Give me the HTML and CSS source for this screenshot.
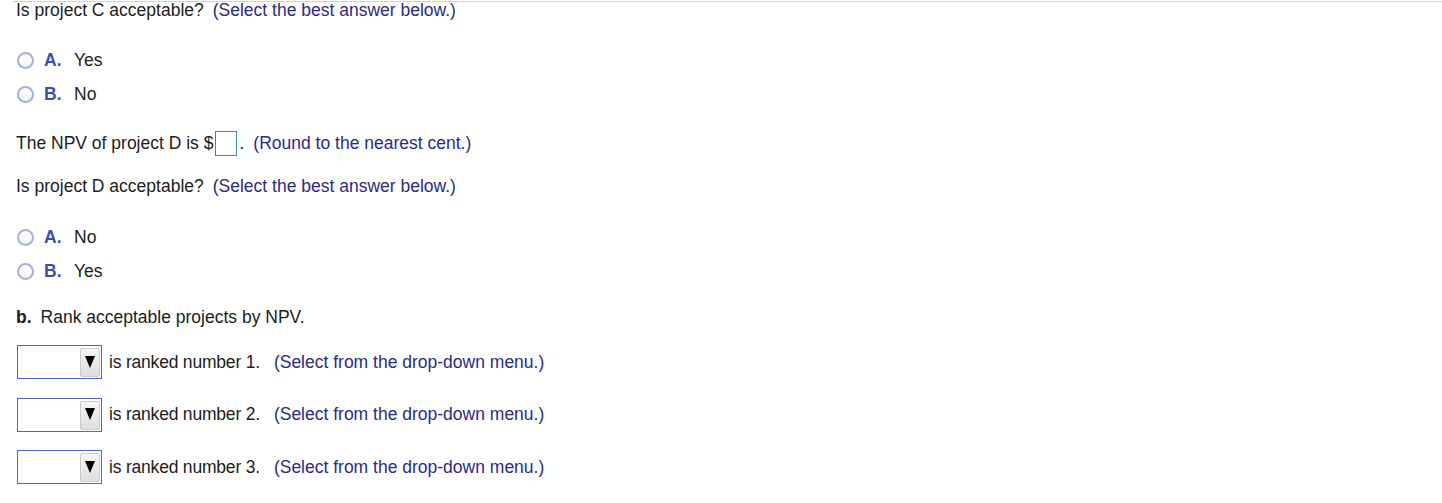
FILE: index.html
```html
<!DOCTYPE html>
<html>
<head>
<meta charset="utf-8">
<link rel="stylesheet" href="styles.css">
</head>
<body>
<div class="page">
  <div class="q q-first">Is project C acceptable?<span class="hint">(Select the best answer below.)</span></div>
  <div class="options opt-c">
    <div class="opt"><span class="radio"></span><span class="letter">A.</span><span class="otext">Yes</span></div>
    <div class="opt"><span class="radio"></span><span class="letter">B.</span><span class="otext">No</span></div>
  </div>
  <div class="npv">The NPV of project D is $<span class="answer"></span>.<span class="hint">(Round to the nearest cent.)</span></div>
  <div class="q q-d">Is project D acceptable?<span class="hint">(Select the best answer below.)</span></div>
  <div class="options opt-d">
    <div class="opt"><span class="radio"></span><span class="letter">A.</span><span class="otext">No</span></div>
    <div class="opt"><span class="radio"></span><span class="letter">B.</span><span class="otext">Yes</span></div>
  </div>
  <div class="q part-b"><b class="pl">b.</b>Rank acceptable projects by NPV.</div>
  <div class="ranks">
    <div class="rank"><span class="select"><span class="btn"><span class="tri"></span></span></span><span class="rtext">is ranked number 1.</span><span class="hint hint-wide">(Select from the drop-down menu.)</span></div>
    <div class="rank"><span class="select"><span class="btn"><span class="tri"></span></span></span><span class="rtext">is ranked number 2.</span><span class="hint hint-wide">(Select from the drop-down menu.)</span></div>
    <div class="rank"><span class="select"><span class="btn"><span class="tri"></span></span></span><span class="rtext">is ranked number 3.</span><span class="hint hint-wide">(Select from the drop-down menu.)</span></div>
  </div>
</div>
</body>
</html>
```

FILE: styles.css
```css
html, body {
  margin: 0;
  padding: 0;
  background: #fff;
}
body {
  font-family: "Liberation Sans", Arial, sans-serif;
  font-size: 17.5px;
  color: #1c1c1c;
}
.page {
  margin-top: 1px;
  margin-left: 13px;
  border-top: 1px solid #d2d2d2;
  padding-left: 3px;
  padding-top: 1px;
  padding-bottom: 10px;
  display: flex;
  flex-direction: column;
}
.q {
  line-height: 20px;
  white-space: nowrap;
}
.q-first {
  line-height: 14px;
  height: 14px;
}
.hint {
  color: #2a2a8c;
  margin-left: 9px;
}
.rtext {
  letter-spacing: -0.2px;
}
.hint-wide {
  margin-left: 14px;
}
.options {
  display: flex;
  flex-direction: column;
}
.opt-c { margin-top: 26px; }
.opt-d { margin-top: 24px; }
.opt {
  height: 34px;
  display: flex;
  align-items: center;
}
.radio {
  width: 13px;
  height: 13px;
  border: 2px solid #a3b0dc;
  border-radius: 50%;
  margin-left: 1px;
  background: linear-gradient(#fff, #f1f3fa);
}
.letter {
  font-weight: bold;
  color: #3a4fb4;
  margin-left: 10px;
  width: 30px;
}
.npv {
  margin-top: 15px;
  height: 34px;
  display: flex;
  align-items: center;
  white-space: nowrap;
}
.answer {
  display: inline-block;
  width: 20px;
  height: 23px;
  border: 1px solid #3f8a95;
  margin-left: 2px;
  margin-right: 2px;
}
.npv .hint { margin-left: 9px; }
.q-d { margin-top: 16px; }
.part-b { margin-top: 19px; }
.pl { margin-right: 9px; }
.ranks {
  margin-top: 18px;
  display: flex;
  flex-direction: column;
  gap: 18.5px;
}
.rank {
  height: 34px;
  display: flex;
  align-items: center;
  white-space: nowrap;
}
.select {
  box-sizing: border-box;
  width: 85px;
  height: 34px;
  border: 1px solid #4c68c4;
  margin-left: 1px;
  display: flex;
  justify-content: flex-end;
  align-items: flex-end;
  padding: 0 1px 1px 0;
  margin-right: 7px;
  background: #fff;
}
.btn {
  box-sizing: border-box;
  width: 20px;
  height: 29px;
  border: 1px solid #cbcbcb;
  border-radius: 2px;
  background: linear-gradient(#f6f6f6, #dedede);
  display: flex;
  align-items: center;
  justify-content: center;
}
.tri {
  width: 0;
  height: 0;
  border-left: 5.5px solid transparent;
  border-right: 5.5px solid transparent;
  border-top: 12px solid #000;
  margin-top: -2px;
}
```
